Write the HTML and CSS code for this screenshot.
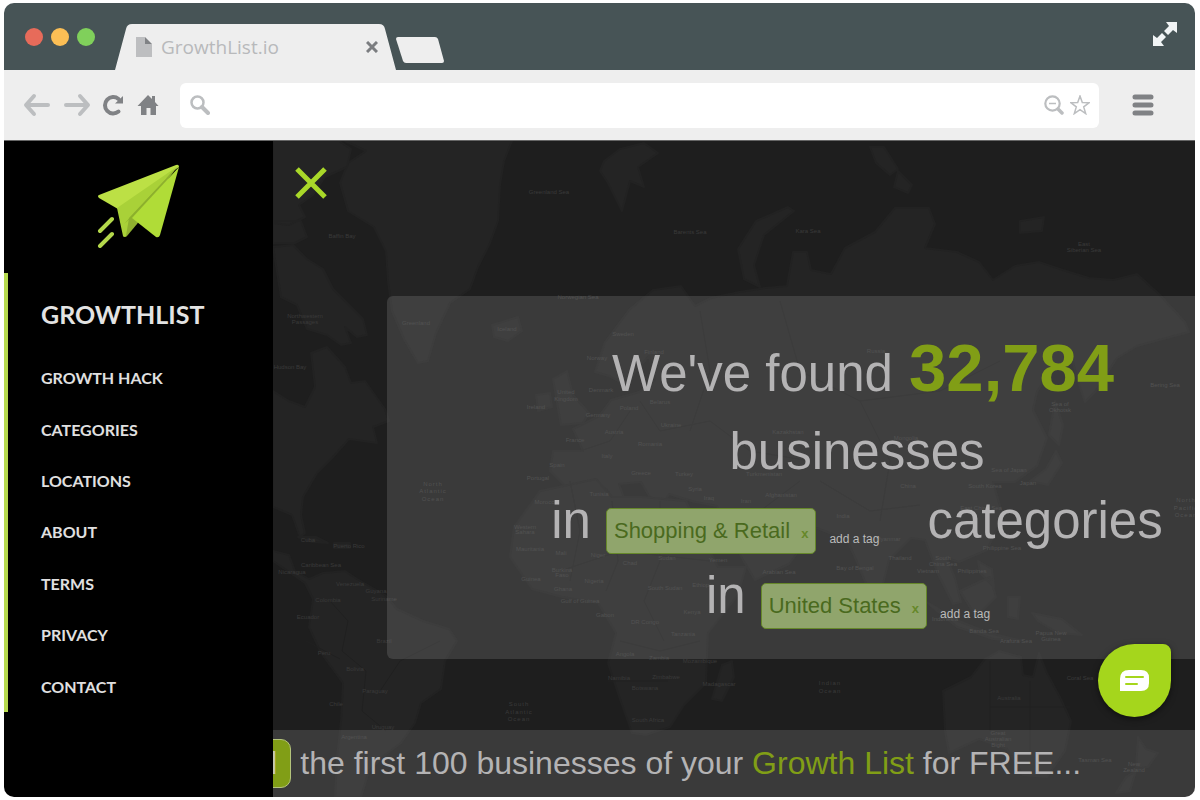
FILE: index.html
```
<!DOCTYPE html>
<html lang="en">
<head>
  <meta charset="UTF-8" />
  <meta name="viewport" content="width=device-width, initial-scale=1.0"/>
  <title>GrowthList.io</title>
  <link rel="stylesheet" href="styles.css">
</head>
<body>
  <div class="window">
    <header class="titlebar">
      <div class="dots">
        <span class="dot red"></span>
        <span class="dot yellow"></span>
        <span class="dot green"></span>
      </div>
      <div class="tab">
        <svg width="16" height="20" viewBox="0 0 16 20">
          <path d="M0 0h9v7h7v13H0z" fill="#bdbec0"/>
          <path d="M9 0l7 7H9z" fill="#808285"/>
        </svg>
        <span class="tab-title">GrowthList.io</span>
        <button class="tab-close" aria-label="Close tab">
          <svg width="12" height="12" viewBox="0 0 12 12"><path d="M1 1l10 10M11 1L1 11" stroke="#7b7d80" stroke-width="3"/></svg>
        </button>
      </div>
      <button class="new-tab" aria-label="New tab"></button>
      <button class="resize" aria-label="Full screen">
        <svg width="24" height="24" viewBox="0 0 24 24" fill="#f1f4f5">
          <path d="M13 0h11v11l-4-3-5 5-4-4 5-5zM0 24V13l4 3 5-5 4 4-5 5 3 4z"/>
          <path d="M9 9l6 6" stroke="#475456" stroke-width="1"/>
        </svg>
      </button>
    </header>

    <div class="toolbar">
      <div class="nav-buttons">
        <button aria-label="Back">
          <svg width="26" height="22" viewBox="0 0 26 22" fill="none" stroke="#bcbec0" stroke-width="4" stroke-linecap="round" stroke-linejoin="round"><path d="M10 2L2 11l8 9M3 11h21"/></svg>
        </button>
        <button aria-label="Forward">
          <svg width="26" height="22" viewBox="0 0 26 22" fill="none" stroke="#bcbec0" stroke-width="4" stroke-linecap="round" stroke-linejoin="round"><path d="M16 2l8 9-8 9M23 11H2"/></svg>
        </button>
        <button aria-label="Reload">
          <svg width="20" height="22" viewBox="0 0 20 22"><path d="M14.500 17.500A8.200 8.200 0 1 1 14.500 5" fill="none" stroke="#808285" stroke-width="4" stroke-linecap="round"/><path d="M19 2v7.500h-8z" fill="#808285"/></svg>
        </button>
        <button aria-label="Home">
          <svg width="20" height="22" viewBox="0 0 20 22" fill="#808285"><path d="M10 1l4 4V2h3v6l3.500 4H18v9h-5.500v-7h-4v7H3v-9H-.5z"/></svg>
        </button>
      </div>
      <div class="address">
        <svg width="20" height="20" viewBox="0 0 20 20" fill="none" stroke="#bcbec0"><circle cx="7.500" cy="7.500" r="6" stroke-width="2.500"/><path d="M12 12l6 6" stroke-width="4" stroke-linecap="round"/></svg>
        <input type="text" aria-label="Address">
        <svg width="20" height="20" viewBox="0 0 20 20" fill="none" stroke="#bcbec0"><circle cx="8.500" cy="8.500" r="7.200" stroke-width="2.200"/><path d="M5 8.500h7" stroke-width="1.500"/><path d="M14 14l4 4" stroke-width="3.500" stroke-linecap="round"/></svg>
        <svg width="20" height="20" viewBox="0 0 20 20" fill="none" stroke="#bcbec0" stroke-width="1.500"><path d="M10 1l2.300 6.600 7 .1-5.600 4.200 2 6.700-5.700-4-5.700 4 2-6.700L.7 7.700l7-.1z"/></svg>
      </div>
      <button class="menu-btn" aria-label="Menu">
        <svg width="22" height="22" viewBox="0 0 22 22" stroke="#808285" stroke-width="5" stroke-linecap="round"><path d="M3 3h16M3 11h16M3 19h16"/></svg>
      </button>
    </div>

    <div class="page">
      <aside class="sidebar">
        <a class="logo" href="#" aria-label="GrowthList home">
          <svg width="84" height="84" viewBox="0 0 84 84">
            <path d="M80 3L28 55v17q0 2 2 0l10-12z" fill="#8fb02f"/>
            <path d="M82 3q0-3-3-2L2 31q-2 1 0 3l19 11z" fill="#bce045"/>
            <path d="M81 2L20 44l6 28q1 2 3 0l3-18z" fill="#a9d138"/>
            <path d="M81 2L27 60l8-7z" fill="#8bb12b"/>
            <path d="M82 3L35 54l24 19q3 1 4-2z" fill="#b0dc37"/>
            <path d="M3 67l12-12M3 82l12-12" stroke="#b4d84b" stroke-width="4" stroke-linecap="round"/>
          </svg>
        </a>
        <nav class="menu">
          <h2>GROWTHLIST</h2>
          <ul>
            <li><a href="#">GROWTH HACK</a></li>
            <li><a href="#">CATEGORIES</a></li>
            <li><a href="#">LOCATIONS</a></li>
            <li><a href="#">ABOUT</a></li>
            <li><a href="#">TERMS</a></li>
            <li><a href="#">PRIVACY</a></li>
            <li><a href="#">CONTACT</a></li>
          </ul>
        </nav>
      </aside>

      <main class="content">
        <svg class="map" viewBox="273 140 922 656" preserveAspectRatio="xMidYMid slice" aria-hidden="true">
          <g class="land">
            <!-- Americas -->
            <path d="M345 140h167l-8 20-4 24-2 36-8 22-12 24-8 22-20 14-14 30-8 28-10 2-14-24-12-28-4-30-2-30-12-24-26-16-8-28 8-20 18-12z"/>
            <path d="M273 140h66l12 8-4 18-22 10-12 18-14 10 6 12-16 8-16-2zM273 220h28l6 16-12 6h-22zM273 246l20-2 14 14 16 10 10 20 14 14 16 16 4 16-10 2-12-10 6 16-10 2-14-10-20-6-10-24-16-8z"/>
            <path d="M273 390l16 10 16 6 10-20-4-34 16-6 18 20 6 16 14-2 20 28 4 12-16 6 4 16-28-4-16 18-16 16-14 24-2 18 4 18-5 4-8-22-19-8z"/>
            <path d="M273 550l16 4 6 16 14 8 14-6 22-2 12 8 28 16 12 14 26 12 26 8 8 12-12 20-4 28-20 14-6 20-14 20-16 12-16 16-8 26h-26l2-40 4-36 2-38-22-30-12-26 4-28-8-16-32-22z"/>
            <path d="M298 536l18 0 12 6-16-1zM334 542h16v5h-16z"/>
            <!-- Europe, Asia -->
            <path d="M550 470l3-20h30l-10-22 26-13 12-16 28-8 16-12-6-24-14 16-8 14-18-10-14-4 10-30 24-32 24-20 28-4 14 20 16-8 28-6 26-4 22-2 6-34h14l4 18 20 4 14-26 30-16 20-24h34l6 16-10 24 32 4 22 10 14 18 22-14 24-4 24 8 26 8 24 2 24-6 22 20 26 28 4 10-30 8-22 6-20 12-22 34-10 10-8-24-4-16-20 4-16 26-4 18 14 28-10 28-22 16-22 0 10 34-16 34-28 12-12-4 8 20 6 24-8 2-16-32-12-32-14-2-22 22-8 32-10 4-14-34-10-22-30-12-10 12-18 24-34 16-12-20-20-38-6-16-22-4-26-8-8 14-12-12-8-14-22 2 8 22-6 6-14-22-16-8-20 10z"/>
            <!-- Africa -->
            <path d="M540 490l56-12 16 18 30 0 44 4 16 34 16 32h28l-8 28-30 38-2 50-22 22-14 22-24 8-14-2-12-34-12-36 8-30-18-30-36-6-30-8-22-32 4-30zM722 664l10-4 2 16-12 24-10-2z"/>
            <!-- Islands -->
            <path d="M553 378l14-8 6 24 16 18-6 10-22 2-4-22zM536 394l14-2 2 14-14 4zM492 324l26-8 4 14-14 10-14-4zM604 160l16-12 24-6 14 10-20 14 6 20-14-6-8 30-14-28-8-12zM870 146l14 0 14 22-8 6-14-12zM898 170l14 14-4 8-14-6zM1020 220l24-4-2 14-22 2z"/>
            <path d="M788 206l6 4-30 24-10 30 6 22-16-8-6-30 18-28zM1055 400l8 24-4 20-10-10zM1030 480l16-12 10-18 6 12-14 22zM925 600l34 20 30 12 34 8-30-2-36-12zM960 590l30-14 6 20-20 20zM1008 596l12 0-2 22-10-2zM978 560l14 8 2 18-14-14zM1032 612l30 6 20 16-24-2-20-12z"/>
            <!-- Oceania -->
            <path d="M943 690l28-14 14-18 14-8 22 6 2 18 10 2 6-24 8 20 14 26 10 22-6 30-18 26-24-2-16-26-28-10-30 14-4-22zM1138 736l8 12 12 4-10 14-12 2zM1126 776l10-6-6 20-14 2z"/>
          </g>
          <g class="borders">
            <path d="M330 600l18 20-6 30 24 20-4 40 24 20M306 640l34 18M570 480l10 50-10 50M612 500l6 60-12 30M660 500v60l-16 40 20 40M620 640l40 10 40-10M608 680h60M560 570l60-20 90 10M640 400l20 30 50-10 40 30 60 10M700 310l10 60-20 60M780 300l20 70 60 30 80-10 60-30M860 400l30 60-10 60M820 480l50 30 50-6M990 660v70M1030 680v70M990 706h80M580 450l30-10 20-30M700 520l60-10 40-30M440 640l-40 20-20 30"/>
          </g>
          <g class="labels">
            <text x="549" y="193">Greenland Sea</text>
            <text x="690" y="233">Barents Sea</text>
            <text x="808" y="232">Kara Sea</text>
            <text x="1084" y="245">East</text><text x="1084" y="251">Siberian Sea</text>
            <text x="342" y="237">Baffin Bay</text>
            <text x="305" y="317">Northwestern</text><text x="305" y="323">Passages</text>
            <text x="290" y="368">Hudson Bay</text>
            <text x="416" y="324">Greenland</text>
            <text x="507" y="330">Iceland</text>
            <text x="578" y="298">Norwegian Sea</text>
            <text x="623" y="335">Sweden</text>
            <text x="654" y="353">Finland</text>
            <text x="597" y="359">Norway</text>
            <text x="566" y="393">United</text><text x="566" y="400">Kingdom</text>
            <text x="601" y="391">Denmark</text>
            <text x="876" y="352">Russia</text>
            <text x="1165" y="386">Bering Sea</text>
            <text x="536" y="408">Ireland</text>
            <text x="598" y="416">Germany</text>
            <text x="629" y="409">Poland</text>
            <text x="660" y="403">Belarus</text>
            <text x="671" y="426">Ukraine</text>
            <text x="614" y="433">Austria</text>
            <text x="575" y="441">France</text>
            <text x="650" y="445">Romania</text>
            <text x="607" y="457">Italy</text>
            <text x="557" y="466">Spain</text>
            <text x="538" y="479">Portugal</text>
            <text x="641" y="474">Greece</text>
            <text x="684" y="475">Turkey</text>
            <text x="599" y="495">Tunisia</text>
            <text x="546" y="503">Morocco</text>
            <text x="695" y="490">Syria</text>
            <text x="709" y="499">Iraq</text>
            <text x="746" y="502">Iran</text>
            <text x="788" y="433">Kazakhstan</text>
            <text x="764" y="475">Turkmenistan</text>
            <text x="781" y="496">Afghanistan</text>
            <text x="906" y="439">Mongolia</text>
            <text x="908" y="487">China</text>
            <text x="1009" y="471">Sea of Japan</text>
            <text x="985" y="487">South Korea</text>
            <text x="1028" y="484">Japan</text>
            <text x="1060" y="405">Sea of</text><text x="1060" y="411">Okhotsk</text>
            <text x="981" y="509">East China Sea</text>
            <text x="843" y="517">India</text>
            <text x="779" y="573">Arabian Sea</text>
            <text x="855" y="569">Bay of Bengal</text>
            <text x="900" y="559">Thailand</text>
            <text x="928" y="572">Vietnam</text>
            <text x="943" y="559">South</text><text x="943" y="565">China Sea</text>
            <text x="972" y="572">Philippines</text>
            <text x="1002" y="549">Philippine Sea</text>
            <text x="888" y="540">Myanmar</text>
            <text x="525" y="528">Western</text><text x="525" y="533">Sahara</text>
            <text x="530" y="550">Mauritania</text>
            <text x="561" y="554">Mali</text>
            <text x="598" y="556">Niger</text>
            <text x="630" y="564">Chad</text>
            <text x="667" y="559">Sudan</text>
            <text x="718" y="561">Yemen</text>
            <text x="562" y="571">Burkina</text><text x="562" y="576">Faso</text>
            <text x="531" y="580">Guinea</text>
            <text x="594" y="582">Nigeria</text>
            <text x="563" y="590">Ghana</text>
            <text x="580" y="602">Gulf of Guinea</text>
            <text x="665" y="589">South Sudan</text>
            <text x="703" y="586">Ethiopia</text>
            <text x="605" y="616">Gabon</text>
            <text x="692" y="613">Kenya</text>
            <text x="645" y="623">DR Congo</text>
            <text x="683" y="635">Tanzania</text>
            <text x="625" y="655">Angola</text>
            <text x="659" y="659">Zambia</text>
            <text x="700" y="662">Mozambique</text>
            <text x="619" y="679">Namibia</text>
            <text x="666" y="678">Zimbabwe</text>
            <text x="645" y="689">Botswana</text>
            <text x="719" y="685">Madagascar</text>
            <text x="648" y="721">South Africa</text>
            <text x="308" y="541">Cuba</text>
            <text x="349" y="547">Puerto Rico</text>
            <text x="321" y="566">Caribbean Sea</text>
            <text x="292" y="573">Nicaragua</text>
            <text x="350" y="585">Venezuela</text>
            <text x="376" y="592">Guyana</text>
            <text x="384" y="600">Suriname</text>
            <text x="328" y="601">Colombia</text>
            <text x="308" y="618">Ecuador</text>
            <text x="324" y="654">Peru</text>
            <text x="384" y="642">Brazil</text>
            <text x="355" y="670">Bolivia</text>
            <text x="375" y="692">Paraguay</text>
            <text x="336" y="705">Chile</text>
            <text x="383" y="728">Uruguay</text>
            <text x="354" y="738">Argentina</text>
            <text x="945" y="620">Indonesia</text>
            <text x="984" y="632">Banda Sea</text>
            <text x="1016" y="642">Arafura Sea</text>
            <text x="1051" y="634">Papua New</text><text x="1051" y="640">Guinea</text>
            <text x="1009" y="699">Australia</text>
            <text x="1080" y="679">Coral Sea</text>
            <text x="998" y="734">Great</text><text x="998" y="740">Australian</text><text x="998" y="746">Bight</text>
            <text x="1095" y="761">Tasman Sea</text>
            <text x="1134" y="765">New</text><text x="1134" y="771">Zealand</text>
          </g>
          <g class="labels ocean">
            <text x="433" y="485">North</text><text x="433" y="492">Atlantic</text><text x="433" y="500">Ocean</text>
            <text x="519" y="705">South</text><text x="519" y="713">Atlantic</text><text x="519" y="720">Ocean</text>
            <text x="830" y="684">Indian</text><text x="830" y="692">Ocean</text>
            <text x="1186" y="501">North</text><text x="1186" y="509">Pacific</text><text x="1186" y="516">Ocean</text>
          </g>
        </svg>

        <button class="close-menu" aria-label="Close menu">
          <svg width="32" height="32" viewBox="0 0 32 32"><path d="M2 2l28 28M30 2L2 30" stroke="#a9d829" stroke-width="5"/></svg>
        </button>

        <section class="panel">
          <p class="line found">We've found <strong>32,784</strong></p>
          <p class="line">businesses</p>
          <div class="tag-line">
            <span>in</span>
            <div class="tags">
              <span class="tag">Shopping &amp; Retail <button aria-label="Remove Shopping &amp; Retail">x</button></span>
              <input type="text" class="tag-input" placeholder="add a tag" aria-label="Add a category">
            </div>
            <span class="after">categories</span>
          </div>
          <div class="tag-line">
            <span>in</span>
            <div class="tags">
              <span class="tag">United States <button aria-label="Remove United States">x</button></span>
              <input type="text" class="tag-input" placeholder="add a tag" aria-label="Add a location">
            </div>
          </div>
        </section>

        <div class="banner">
          <button class="download">Download</button>
          <p>the first 100 businesses of your <a href="#">Growth List</a> for FREE...</p>
        </div>

        <button class="chat" aria-label="Open chat">
          <svg width="30" height="22" viewBox="0 0 30 22"><path d="M9 0h12q8 0 8 8v5q0 8-8 8H0V9q0-9 9-9z" fill="#fff"/><path d="M6 7h17M6 14h11" stroke="#a5d61c" stroke-width="2" stroke-linecap="round"/></svg>
        </button>
      </main>
    </div>
  </div>
</body>
</html>
```
FILE: styles.css
```
* {
  box-sizing: border-box;
}
body {
  margin: 0;
  padding: 3px 5px 4px 4px;
  background: #fff;
  font-family: "Liberation Sans", Arial, sans-serif;
}
button {
  padding: 0;
  border: none;
  background: none;
  cursor: pointer;
}
svg {
  display: block;
}
p, h2, ul {
  margin: 0;
  padding: 0;
}
a {
  text-decoration: none;
}

.window {
  display: flex;
  flex-direction: column;
  min-height: calc(100vh - 7px);
  border-radius: 10px;
  overflow: hidden;
}

/* browser chrome */
.titlebar {
  display: flex;
  align-items: flex-end;
  height: 67px;
  padding: 0 18px 0 21px;
  background: #475456;
}
.dots {
  display: flex;
  gap: 8px;
  margin: 0 20px 24px 0;
}
.dot {
  width: 18px;
  height: 18px;
  border-radius: 50%;
}
.red {
  background: #e76b5a;
}
.yellow {
  background: #fcbf55;
}
.green {
  background: #80d05b;
}
.tab {
  display: flex;
  align-items: center;
  width: 281px;
  height: 46px;
  padding: 0 18px 0 21px;
  background: #eee;
  clip-path: path("M0 46L11 5Q12 0 17 0H264Q269 0 270 5L281 46Z");
}
.tab-title {
  flex: 1;
  margin-left: 9px;
  font-family: "Open Sans", sans-serif;
  font-size: 19px;
  color: #b8b9bb;
}
.new-tab {
  width: 48px;
  height: 26px;
  margin-bottom: 7px;
  background: #eee;
  clip-path: path("M2 0H39Q41 0 42 2L48 24Q48 26 46 26H10Q8 26 7 24L0 2Q0 0 2 0Z");
}
.resize {
  margin: 0 0 24px auto;
}
.toolbar {
  display: flex;
  align-items: center;
  gap: 33px;
  height: 71px;
  padding: 0 41px 0 20px;
  background: #eee;
  border-bottom: 1px solid #666;
}
.nav-buttons {
  display: flex;
  gap: 14px;
}
.nav-buttons svg {
  overflow: visible;
}
.address {
  display: flex;
  align-items: center;
  gap: 6px;
  flex: 1;
  height: 45px;
  margin-left: -11px;
  padding: 0 9px 0 10px;
  background: #fff;
  border-radius: 6px;
}
.address input {
  flex: 1;
  min-width: 0;
  border: none;
  outline: none;
  font-size: 18px;
}

/* page */
.page {
  display: flex;
  flex: 1;
}
.sidebar {
  flex: 0 0 269px;
  background: #000;
}
.logo {
  display: flex;
  justify-content: center;
  padding: 23px 0 25px;
}
.menu {
  border-left: 4px solid #b6da4f;
  padding-left: 33px;
  font-family: Lato, sans-serif;
}
.menu h2 {
  padding-top: 4px;
  font-size: 25px;
  line-height: 75px;
  color: #e3e3e3;
}
.menu ul {
  display: grid;
  grid-auto-rows: 1fr;
  align-items: center;
  height: 360px;
  list-style: none;
}
.menu a {
  font-size: 16px;
  font-weight: bold;
  color: #e0e0e0;
}
.content {
  position: relative;
  display: flex;
  flex-direction: column;
  flex: 1;
  min-width: 0;
  overflow: hidden;
  background: #1e1e1e;
  color: #b4b3b4;
}
.map {
  position: absolute;
  width: 100%;
  height: 100%;
}
.land {
  fill: #242424;
  stroke: #222;
  stroke-width: 2;
  stroke-linejoin: round;
}
.borders {
  fill: none;
  stroke: #202020;
}
.labels {
  fill: #3a3a3a;
  font-size: 6px;
  text-anchor: middle;
}
.ocean {
  letter-spacing: 1px;
}
.close-menu {
  position: relative;
  align-self: flex-start;
  margin: 26px 0 97px 22px;
}

.panel {
  position: relative;
  margin: 0 -132px 71px 114px;
  padding: 38px 0 19px;
  background: rgba(255, 255, 255, 0.125);
  border-radius: 6px;
  font-size: 51px;
  text-align: center;
}
.line {
  line-height: 77px;
}
.found {
  padding-left: 12px;
  line-height: 79px;
}
.found strong {
  margin-left: 2px;
  font-size: 67px;
  line-height: 1px;
  color: #819e16;
}
.tag-line {
  display: flex;
  justify-content: center;
  align-items: baseline;
  gap: 15px;
  margin-bottom: 11px;
  line-height: 62px;
}
.tags {
  display: flex;
  align-items: flex-end;
  gap: 13px;
}
.tag {
  height: 46px;
  padding: 0 7px;
  border: 1px solid #66882a;
  border-radius: 5px;
  background: #90a56c;
  font-size: 22px;
  line-height: 44px;
  color: #4a6a1e;
}
.tag button {
  margin-left: 5px;
  font-family: inherit;
  font-size: 13px;
  font-weight: bold;
  color: #66882a;
}
.tag-input {
  width: 68px;
  margin-bottom: 8px;
  padding: 0;
  border: none;
  outline: none;
  background: none;
  font-family: inherit;
  font-size: 12px;
}
.tag-input::placeholder {
  color: #bbb;
}
.after {
  margin-left: 15px;
}

.banner {
  position: relative;
  display: flex;
  align-items: center;
  gap: 9px;
  height: 67px;
  margin-top: auto;
  margin-left: -152px;
  background: rgba(255, 255, 255, 0.125);
  font-size: 32px;
  white-space: nowrap;
}
.banner a {
  color: #819e16;
}
.download {
  height: 49px;
  padding: 0 13px;
  border: 1px solid #b4c47c;
  border-radius: 10px;
  background: #819e16;
  font-family: inherit;
  font-size: 32px;
  color: #c4c8b4;
}

.chat {
  position: absolute;
  right: 24px;
  bottom: 80px;
  display: flex;
  align-items: center;
  justify-content: center;
  width: 73px;
  height: 73px;
  border-radius: 50% 8px 50% 50%;
  background: #a5d61c;
  box-shadow: 0 2px 6px rgba(0, 0, 0, 0.5);
}
```
